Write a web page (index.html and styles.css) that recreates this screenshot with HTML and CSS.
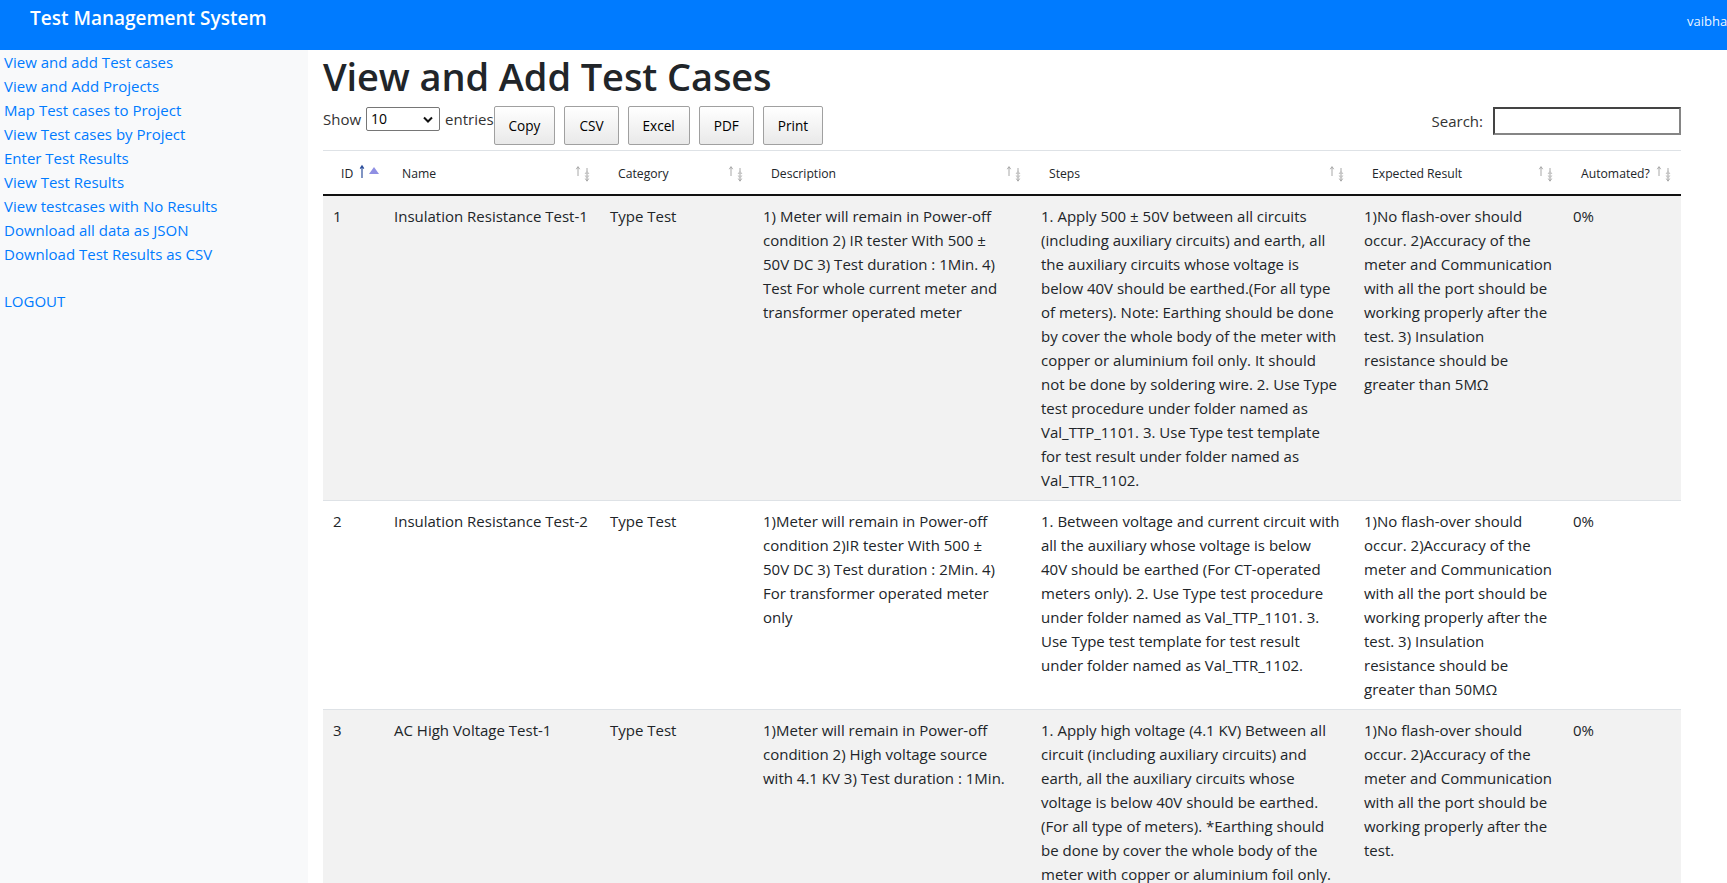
FILE: index.html
```html
<!DOCTYPE html>
<html lang="en">
<head>
<meta charset="utf-8">
<title>View and Add Test Cases</title>
<link rel="stylesheet" href="styles.css">
</head>
<body>
<nav class="navbar">
  <a class="brand" href="#">Test Management System</a>
  <span class="nav-user">vaibhav</span>
</nav>
<div class="layout">
  <aside class="sidebar">
    <a href="#">View and add Test cases</a>
    <a href="#">View and Add Projects</a>
    <a href="#">Map Test cases to Project</a>
    <a href="#">View Test cases by Project</a>
    <a href="#">Enter Test Results</a>
    <a href="#">View Test Results</a>
    <a href="#">View testcases with No Results</a>
    <a href="#">Download all data as JSON</a>
    <a href="#">Download Test Results as CSV</a>
    <a href="#" class="logout">LOGOUT</a>
  </aside>
  <main class="main">
    <h1 class="title">View and Add Test Cases</h1>
    <div class="dt-top">
      <div class="dt-left">
        <label class="dt-length">Show
          <span class="select"><span>10</span>
            <svg class="chev" width="10" height="7" viewBox="0 0 10 7"><path d="M1 1.5 L5 5.5 L9 1.5" fill="none" stroke="#111" stroke-width="2"/></svg>
          </span>
          entries</label>
        <div class="dt-buttons">
          <button class="dt-button">Copy</button>
          <button class="dt-button">CSV</button>
          <button class="dt-button">Excel</button>
          <button class="dt-button">PDF</button>
          <button class="dt-button">Print</button>
        </div>
      </div>
      <label class="dt-search">Search:<span class="search-input"></span></label>
    </div>
    <table class="grid">
      <colgroup>
        <col class="c-id"><col class="c-name"><col class="c-cat"><col class="c-desc"><col class="c-steps"><col class="c-exp"><col class="c-auto">
      </colgroup>
      <thead>
        <tr>
          <th class="sorted">ID
            <svg class="sort sort-id" width="22" height="16" viewBox="0 0 22 16"><path d="M3 14 V2 M1.2 4.6 L3 1.8 L4.8 4.6" fill="none" stroke="#2d4f9c" stroke-width="1.2"/><path d="M10 10 L15 3 L20 10 Z" fill="#8f8fe3"/></svg>
          </th>
          <th>Name<svg class="sort" width="20" height="18" viewBox="0 0 20 18"><g fill="none" stroke="#a8a8a8" stroke-width="1"><path d="M3 11 V2 M1.3 4.2 L3 1.6 L4.7 4.2"/><path d="M12 3 V16 M10.3 13.6 L12 16.2 L13.7 13.6"/></g><path d="M9.5 9 L12 5.5 L14.5 9 Z M9.5 10.5 L12 14 L14.5 10.5 Z" fill="#c6c6c6"/></svg></th>
          <th>Category<svg class="sort" width="20" height="18" viewBox="0 0 20 18"><g fill="none" stroke="#a8a8a8" stroke-width="1"><path d="M3 11 V2 M1.3 4.2 L3 1.6 L4.7 4.2"/><path d="M12 3 V16 M10.3 13.6 L12 16.2 L13.7 13.6"/></g><path d="M9.5 9 L12 5.5 L14.5 9 Z M9.5 10.5 L12 14 L14.5 10.5 Z" fill="#c6c6c6"/></svg></th>
          <th>Description<svg class="sort" width="20" height="18" viewBox="0 0 20 18"><g fill="none" stroke="#a8a8a8" stroke-width="1"><path d="M3 11 V2 M1.3 4.2 L3 1.6 L4.7 4.2"/><path d="M12 3 V16 M10.3 13.6 L12 16.2 L13.7 13.6"/></g><path d="M9.5 9 L12 5.5 L14.5 9 Z M9.5 10.5 L12 14 L14.5 10.5 Z" fill="#c6c6c6"/></svg></th>
          <th>Steps<svg class="sort" width="20" height="18" viewBox="0 0 20 18"><g fill="none" stroke="#a8a8a8" stroke-width="1"><path d="M3 11 V2 M1.3 4.2 L3 1.6 L4.7 4.2"/><path d="M12 3 V16 M10.3 13.6 L12 16.2 L13.7 13.6"/></g><path d="M9.5 9 L12 5.5 L14.5 9 Z M9.5 10.5 L12 14 L14.5 10.5 Z" fill="#c6c6c6"/></svg></th>
          <th>Expected Result<svg class="sort" width="20" height="18" viewBox="0 0 20 18"><g fill="none" stroke="#a8a8a8" stroke-width="1"><path d="M3 11 V2 M1.3 4.2 L3 1.6 L4.7 4.2"/><path d="M12 3 V16 M10.3 13.6 L12 16.2 L13.7 13.6"/></g><path d="M9.5 9 L12 5.5 L14.5 9 Z M9.5 10.5 L12 14 L14.5 10.5 Z" fill="#c6c6c6"/></svg></th>
          <th>Automated?<svg class="sort" width="20" height="18" viewBox="0 0 20 18"><g fill="none" stroke="#a8a8a8" stroke-width="1"><path d="M3 11 V2 M1.3 4.2 L3 1.6 L4.7 4.2"/><path d="M12 3 V16 M10.3 13.6 L12 16.2 L13.7 13.6"/></g><path d="M9.5 9 L12 5.5 L14.5 9 Z M9.5 10.5 L12 14 L14.5 10.5 Z" fill="#c6c6c6"/></svg></th>
        </tr>
      </thead>
      <tbody>
        <tr class="odd">
          <td>1</td>
          <td>Insulation Resistance Test-1</td>
          <td>Type Test</td>
          <td>1) Meter will remain in Power-off<br>condition 2) IR tester With 500 ±<br>50V DC 3) Test duration : 1Min. 4)<br>Test For whole current meter and<br>transformer operated meter</td>
          <td>1. Apply 500 ± 50V between all circuits<br>(including auxiliary circuits) and earth, all<br>the auxiliary circuits whose voltage is<br>below 40V should be earthed.(For all type<br>of meters). Note: Earthing should be done<br>by cover the whole body of the meter with<br>copper or aluminium foil only. It should<br>not be done by soldering wire. 2. Use Type<br>test procedure under folder named as<br>Val_TTP_1101. 3. Use Type test template<br>for test result under folder named as<br>Val_TTR_1102.</td>
          <td class="exp">1)No flash-over should<br>occur. 2)Accuracy of the<br>meter and Communication<br>with all the port should be<br>working properly after the<br>test. 3) Insulation<br>resistance should be<br>greater than 5MΩ</td>
          <td>0%</td>
        </tr>
        <tr class="even">
          <td>2</td>
          <td>Insulation Resistance Test-2</td>
          <td>Type Test</td>
          <td>1)Meter will remain in Power-off<br>condition 2)IR tester With 500 ±<br>50V DC 3) Test duration : 2Min. 4)<br>For transformer operated meter<br>only</td>
          <td>1. Between voltage and current circuit with<br>all the auxiliary whose voltage is below<br>40V should be earthed (For CT-operated<br>meters only). 2. Use Type test procedure<br>under folder named as Val_TTP_1101. 3.<br>Use Type test template for test result<br>under folder named as Val_TTR_1102.</td>
          <td class="exp">1)No flash-over should<br>occur. 2)Accuracy of the<br>meter and Communication<br>with all the port should be<br>working properly after the<br>test. 3) Insulation<br>resistance should be<br>greater than 50MΩ</td>
          <td>0%</td>
        </tr>
        <tr class="odd">
          <td>3</td>
          <td>AC High Voltage Test-1</td>
          <td>Type Test</td>
          <td>1)Meter will remain in Power-off<br>condition 2) High voltage source<br>with 4.1 KV 3) Test duration : 1Min.</td>
          <td>1. Apply high voltage (4.1 KV) Between all<br>circuit (including auxiliary circuits) and<br>earth, all the auxiliary circuits whose<br>voltage is below 40V should be earthed.<br>(For all type of meters). *Earthing should<br>be done by cover the whole body of the<br>meter with copper or aluminium foil only.<br>It should not be done by soldering wire.<br>2. Use Type test procedure under folder<br>named as Val_TTP_1102.</td>
          <td class="exp">1)No flash-over should<br>occur. 2)Accuracy of the<br>meter and Communication<br>with all the port should be<br>working properly after the<br>test.</td>
          <td>0%</td>
        </tr>
      </tbody>
    </table>
  </main>
</div>
</body>
</html>
```
FILE: styles.css
```css
html, body {
  margin: 0;
  padding: 0;
}
body {
  font-family: "Open Sans", "Noto Sans", sans-serif;
  font-size: 15px;
  line-height: 24px;
  color: #212529;
  background: #fff;
  overflow: hidden;
  height: 883px;
  display: flex;
  flex-direction: column;
}

/* ---------- navbar ---------- */
.navbar {
  height: 50px;
  flex: 0 0 50px;
  background: #007bff;
  display: flex;
  align-items: flex-start;
  padding-left: 30px;
  overflow: hidden;
}
.brand {
  color: #fff;
  text-decoration: none;
  font-size: 19px;
  font-weight: 600;
  line-height: 26px;
  padding-top: 5px;
}
.nav-user {
  margin-left: auto;
  width: 40px;
  white-space: nowrap;
  color: rgba(255, 255, 255, 0.95);
  font-size: 13px;
  font-weight: 500;
  line-height: 20px;
  padding-top: 11px;
}

/* ---------- layout ---------- */
.layout {
  flex: 1 1 auto;
  display: flex;
  min-height: 0;
}
.sidebar {
  flex: 0 0 308px;
  background: #f8f9fa;
  display: flex;
  flex-direction: column;
  align-items: flex-start;
  padding: 0 0 0 4px;
  box-sizing: border-box;
}
.sidebar a {
  color: #007bff;
  text-decoration: none;
  font-size: 15px;
  line-height: 24px;
}
.sidebar .logout {
  margin-top: 23px;
}

.main {
  flex: 1 1 auto;
  padding: 0 46px 0 15px;
  min-width: 0;
}
.title {
  margin: 4px 0 6px;
  font-size: 38px;
  line-height: 45px;
  font-weight: 600;
  color: #212529;
  letter-spacing: -0.1px;
}

/* ---------- datatable controls ---------- */
.dt-top {
  display: flex;
  justify-content: space-between;
  align-items: flex-start;
  padding-top: 1px;
}
.dt-left {
  display: flex;
  align-items: flex-start;
}
.dt-length {
  display: flex;
  align-items: center;
  gap: 5px;
  margin-top: 1px;
  color: #333;
  line-height: 24px;
}
.select {
  box-sizing: border-box;
  width: 74px;
  height: 24px;
  border: 1px solid #767676;
  border-radius: 2px;
  background: #fff;
  display: flex;
  align-items: center;
  justify-content: space-between;
  padding: 0 6px 0 4px;
  font-size: 14px;
  color: #000;
}
.chev {
  display: block;
}
.dt-buttons {
  display: flex;
  gap: 9px;
  margin-bottom: 5px;
}
.dt-button {
  box-sizing: border-box;
  height: 38.5px;
  padding: 8px 14px 6px;
  border: 1px solid #a0a0a0;
  border-radius: 2px;
  background: linear-gradient(to bottom, #ffffff 0%, #e9e9e9 100%);
  font-family: "Open Sans", "Noto Sans", sans-serif;
  font-size: 13.6px;
  line-height: 22px;
  color: #000;
}
.dt-search {
  display: flex;
  align-items: center;
  gap: 10px;
  margin-top: 1px;
  color: #333;
}
.search-input {
  box-sizing: border-box;
  width: 188px;
  height: 28px;
  border: 2px solid #444;
  border-right-color: #858585;
  border-bottom-color: #858585;
  background: #fff;
}

/* ---------- table ---------- */
.grid {
  width: 1358px;
  table-layout: fixed;
  border-collapse: collapse;
}
.c-id { width: 61px; }
.c-name { width: 216px; }
.c-cat { width: 153px; }
.c-desc { width: 278px; }
.c-steps { width: 323px; }
.c-exp { width: 209px; }
.c-auto { width: 118px; }

.grid th {
  position: relative;
  text-align: left;
  font-weight: 400;
  font-size: 12.2px;
  line-height: 20px;
  padding: 13px 18px 10px;
  border-top: 1px solid #dee2e6;
  border-bottom: 2px solid #111;
  color: #212529;
  white-space: nowrap;
}
.sort {
  position: absolute;
  right: 5px;
  top: 14px;
}
.sort-id {
  right: 3px;
  top: 13px;
}
.grid td {
  vertical-align: top;
  padding: 8px 6px 8px 10px;
  border-top: 1px solid #dee2e6;
  line-height: 24px;
  font-size: 15px;
  color: #212529;
}
.grid tr.odd td {
  background: #f2f2f2;
}
.grid tr.even td {
  background: #fff;
}
```
